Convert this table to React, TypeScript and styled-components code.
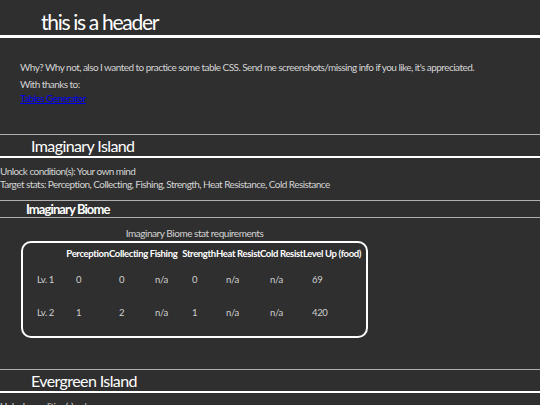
import React from "react";
import styled, { createGlobalStyle } from "styled-components";

const Global = createGlobalStyle`
  html, body { margin: 0; padding: 0; }
  body {
    background: #2f2f2f;
    color: #d4d4d4;
    font-family: Lato, "DejaVu Sans Condensed", sans-serif;
    overflow: hidden;
  }
`;

const PageHeader = styled.header`
  padding: 10px 0 1px 41px;
  border-bottom: 3px solid #ffffff;
`;

const PageTitle = styled.h1`
  margin: 0;
  font-size: 21px;
  line-height: 24px;
  font-weight: 400;
  letter-spacing: -1.3px;
  color: #ffffff;
`;

const Intro = styled.section`
  padding: 22px 20px 0 20px;
  font-size: 10px;
  line-height: 14px;
  letter-spacing: -0.55px;
  white-space: nowrap;
`;

const Para = styled.p<{ $gap?: number }>`
  margin: 0 0 ${(p) => p.$gap ?? 0}px 0;
`;

const Link = styled.a`
  color: #0000ee;
  text-decoration: underline;
`;

const IslandHeader = styled.div<{ $top: number }>`
  margin-top: ${(p) => p.$top}px;
  border-top: 1px solid #b0b0b0;
  border-bottom: 2px solid #ffffff;
  padding-left: 31px;
`;

const IslandTitle = styled.h2`
  margin: 0;
  font-size: 16px;
  line-height: 21px;
  font-weight: 400;
  letter-spacing: -0.6px;
  color: #ffffff;
`;

const Info = styled.div<{ $top: number }>`
  margin-top: ${(p) => p.$top}px;
  font-size: 10px;
  line-height: 13px;
  letter-spacing: -0.55px;
  white-space: nowrap;
`;

const BiomeHeader = styled.div`
  margin-top: 9px;
  border-top: 1px solid #b0b0b0;
  border-bottom: 1px solid #b0b0b0;
  padding-left: 26px;
`;

const BiomeTitle = styled.h3`
  margin: 0;
  font-size: 13px;
  line-height: 16px;
  font-weight: 700;
  letter-spacing: -0.9px;
  color: #ffffff;
`;

const TableWrap = styled.div`
  margin: 9px 0 0 21px;
  width: 347px;
`;

const Caption = styled.div`
  text-align: center;
  font-size: 10px;
  line-height: 13px;
  letter-spacing: -0.45px;
  margin-bottom: 1px;
  color: #d4d4d4;
`;

const Table = styled.table`
  width: 347px;
  border: 2px solid #ffffff;
  border-radius: 10px;
  border-collapse: separate;
  border-spacing: 0;
  table-layout: fixed;
  padding: 0 4px 7px 0;
  font-size: 9.5px;
  letter-spacing: -0.35px;
`;

const Th = styled.th`
  padding: 4px 0 3px 0;
  line-height: 13px;
  font-weight: 700;
  color: #ffffff;
  text-align: center;
  white-space: nowrap;
`;

const Td = styled.td<{ $label?: boolean }>`
  padding: 10px 0 10px ${(p) => (p.$label ? 14 : 10)}px;
  line-height: 13px;
  color: #cfcfcf;
  text-align: left;
  white-space: nowrap;
`;

const cols = [43, 43, 36, 37, 34, 44, 42, 60];
const headers = ["", "Perception", "Collecting", "Fishing", "Strength", "Heat Resist", "Cold Resist", "Level Up (food)"];
const rows = [
  ["Lv. 1", "0", "0", "n/a", "0", "n/a", "n/a", "69"],
  ["Lv. 2", "1", "2", "n/a", "1", "n/a", "n/a", "420"],
];

export default function App() {
  return (
    <>
      <Global />
      <PageHeader>
        <PageTitle>this is a header</PageTitle>
      </PageHeader>
      <Intro>
        <Para $gap={3}>
          Why? Why not, also I wanted to practice some table CSS. Send me screenshots/missing info if you like, it's appreciated.
        </Para>
        <Para>With thanks to:</Para>
        <Para>
          <Link href="#">Tables Generator</Link>
        </Para>
      </Intro>

      <IslandHeader $top={29}>
        <IslandTitle>Imaginary Island</IslandTitle>
      </IslandHeader>
      <Info $top={7}>
        <div>Unlock condition(s): Your own mind</div>
        <div>Target stats: Perception, Collecting, Fishing, Strength, Heat Resistance, Cold Resistance</div>
      </Info>
      <BiomeHeader>
        <BiomeTitle>Imaginary Biome</BiomeTitle>
      </BiomeHeader>
      <TableWrap>
        <Caption>Imaginary Biome stat requirements</Caption>
        <Table>
          <colgroup>
            {cols.map((w, i) => (
              <col key={i} style={{ width: w }} />
            ))}
          </colgroup>
          <thead>
            <tr>
              {headers.map((h, i) => (
                <Th key={i}>{h}</Th>
              ))}
            </tr>
          </thead>
          <tbody>
            {rows.map((r, ri) => (
              <tr key={ri}>
                {r.map((c, ci) => (
                  <Td key={ci} $label={ci === 0}>
                    {c}
                  </Td>
                ))}
              </tr>
            ))}
          </tbody>
        </Table>
      </TableWrap>

      <IslandHeader $top={31}>
        <IslandTitle>Evergreen Island</IslandTitle>
      </IslandHeader>
      <Info $top={7}>
        <div>Unlock condition(s): n/a</div>
      </Info>
    </>
  );
}
